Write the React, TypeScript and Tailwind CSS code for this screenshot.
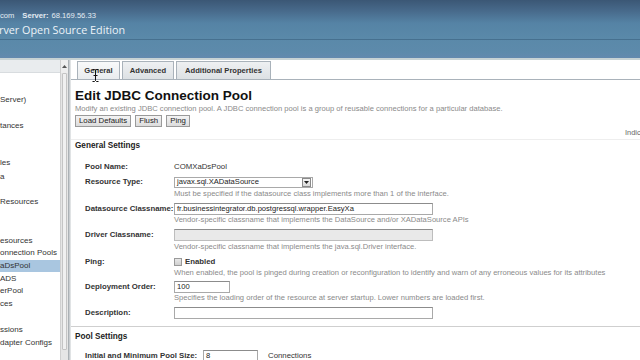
import React from "react";

const Label = ({ children }: { children: React.ReactNode }) => (
  <div className="w-[103px] shrink-0 pl-[14px] font-bold text-[7.8px] text-[#333] whitespace-nowrap">{children}</div>
);

const Help = ({ children, h = 12, mt = 0 }: { children: React.ReactNode; h?: number; mt?: number }) => (
  <div
    className="pl-[103px] text-[7.6px] text-[#8a8a8a] whitespace-nowrap flex items-center shrink-0"
    style={{ height: h, marginTop: mt }}
  >
    {children}
  </div>
);

const Input = ({ w, value, disabled }: { w: number; value?: string; disabled?: boolean }) => (
  <div
    className={
      "h-[12px] border border-[#a9a9a9] border-t-[#8c8c8c] flex items-center pl-[2px] text-[7.6px] text-[#222] whitespace-nowrap overflow-hidden " +
      (disabled ? "bg-[#e9e9e9] border-[#bdbdbd]" : "bg-white")
    }
    style={{ width: w }}
  >
    {value}
  </div>
);

const Row = ({ children, h = 12, mt = 0 }: { children: React.ReactNode; h?: number; mt?: number }) => (
  <div className="flex items-center shrink-0" style={{ height: h, marginTop: mt }}>
    {children}
  </div>
);

const sideItems: { t: string; y: number; sel?: boolean }[] = [
  { t: "Server)", y: 100 },
  { t: "tances", y: 126 },
  { t: "les", y: 163 },
  { t: "a", y: 177 },
  { t: "Resources", y: 202 },
  { t: "esources", y: 241 },
  { t: "onnection Pools", y: 253 },
  { t: "aDsPool", y: 266, sel: true },
  { t: "ADS", y: 279 },
  { t: "erPool", y: 291 },
  { t: "ces", y: 304 },
  { t: "ssions", y: 330 },
  { t: "dapter Configs", y: 343 },
];

export default function App() {
  return (
    <div className="w-[640px] h-[360px] overflow-hidden flex flex-col bg-white font-['Liberation_Sans',Arial,sans-serif]">
      {/* Header */}
      <div className="h-[58px] shrink-0 flex flex-col bg-[linear-gradient(to_bottom,#3b5775_0%,#47698a_18%,#5583a5_40%,#5a89a9_65%,#5d8aab_90%,#6389ae_100%)]">
        <div className="h-[10px]" />
        <div className="h-[12px] flex items-center text-[7.6px] text-[#e4ecf3] whitespace-nowrap">
          <span>com</span>
          <span className="ml-[8px] font-bold">Server:</span>
          <span className="ml-[3px]">68.169.56.33</span>
        </div>
        <div className="h-[16px] flex items-center text-[10.8px] text-[#edf3f8] font-['Open_Sans',sans-serif] whitespace-nowrap -ml-[1px]">
          rver Open Source Edition
        </div>
        <div className="h-[1px] mt-[1px] bg-[#46708f]" />
      </div>
      <div className="h-[2px] shrink-0 bg-[#c7d2d4]" />
      {/* Body */}
      <div className="flex-1 flex min-h-0">
        {/* Sidebar */}
        <div className="w-[60px] shrink-0 flex flex-col">
          <div className="h-[13px] bg-[#e9ecee] border-b border-[#d8dcdf]" />
          <div className="relative flex-1 bg-white">
            {sideItems.map((it) => (
              <div
                key={it.t}
                className={
                  "absolute left-0 w-[60px] h-[12px] flex items-center text-[8px] text-[#333] whitespace-nowrap overflow-hidden " +
                  (it.sel ? "bg-[#a9c6e0]" : "")
                }
                style={{ top: it.y - 79 }}
              >
                {it.t}
              </div>
            ))}
          </div>
        </div>
        {/* Scrollbar */}
        <div className="w-[8px] shrink-0 flex flex-col bg-[#e6e6e6] border-l border-[#d0d0d0]">
          <div className="h-[13px] bg-[#eeeeee] flex items-center justify-center">
            <svg width="5" height="3" viewBox="0 0 5 3">
              <path d="M0 3 L2.5 0 L5 3 Z" fill="#555" />
            </svg>
          </div>
          <div className="flex-1 mx-[1px] mb-[10px] bg-[#f0f0f0] border border-[#c4c4c4] rounded-[1px]" />
        </div>
        <div className="w-[3px] shrink-0 bg-[linear-gradient(to_right,#9da3a8,#c9cdd0,#eceeef)]" />
        {/* Content */}
        <div className="relative flex-1 flex flex-col min-w-0 bg-white">
          {/* Tabs */}
          <div className="h-[20px] shrink-0 flex items-end border-b border-[#a9b2ba] pl-[6px] gap-[2px]">
            <div className="w-[43px] h-[18px] flex items-center justify-center border border-b-0 border-[#a9b2ba] bg-[linear-gradient(to_bottom,#f8f9fa,#e9ecee)] text-[7.6px] font-bold text-[#333]">
              General
            </div>
            <div className="w-[52px] h-[18px] flex items-center justify-center border border-b-0 border-[#a9b2ba] bg-[linear-gradient(to_bottom,#eef0f2,#dde1e4)] text-[7.6px] font-bold text-[#333]">
              Advanced
            </div>
            <div className="w-[95px] h-[18px] flex items-center justify-center border border-b-0 border-[#a9b2ba] bg-[linear-gradient(to_bottom,#eef0f2,#dde1e4)] text-[7.6px] font-bold text-[#333]">
              Additional Properties
            </div>
          </div>
          {/* I-beam cursor */}
          <svg className="absolute left-[21px] top-[9px]" width="7" height="13" viewBox="0 0 7 13">
            <path d="M0.5 0.5 H2.5 L3.5 1.5 L4.5 0.5 H6.5 M3.5 1.5 V11.5 M0.5 12.5 H2.5 L3.5 11.5 L4.5 12.5 H6.5 M1.5 6.5 H5.5" stroke="#111" strokeWidth="1" fill="none" />
          </svg>

          <div className="pl-[4px] shrink-0">
            <div className="mt-[8px] h-[16px] leading-[16px] text-[13.5px] font-bold text-[#111] whitespace-nowrap">
              Edit JDBC Connection Pool
            </div>
            <div className="h-[10px] leading-[10px] text-[7.6px] text-[#8a8a8a] whitespace-nowrap">
              Modify an existing JDBC connection pool. A JDBC connection pool is a group of reusable connections for a particular database.
            </div>
            <div className="mt-[1px] h-[12px] flex gap-[4px]">
              {["Load Defaults", "Flush", "Ping"].map((b) => (
                <div
                  key={b}
                  className="h-[12px] px-[3px] flex items-center border border-[#9a9a9a] bg-[linear-gradient(to_bottom,#f4f4f4,#dcdcdc)] text-[7.8px] text-[#222] whitespace-nowrap"
                >
                  {b}
                </div>
              ))}
            </div>
          </div>
          <div className="h-[12px] shrink-0 flex items-center pl-[554px] text-[7.4px] text-[#666] whitespace-nowrap overflow-hidden">
            Indicates required field
          </div>
          <div className="h-[1px] shrink-0 bg-[#eeeeee]" />
          <div className="h-[12px] shrink-0 flex items-center pl-[4px] text-[8.2px] font-bold text-[#222]">
            General Settings
          </div>

          <Row mt={9}>
            <Label>Pool Name:</Label>
            <div className="text-[7.8px] text-[#333]">COMXaDsPool</div>
          </Row>
          <Row mt={3}>
            <Label>Resource Type:</Label>
            <div className="w-[139px] h-[11px] border border-[#a9a9a9] bg-white flex items-center">
              <div className="flex-1 pl-[2px] text-[7.6px] text-[#222] whitespace-nowrap">javax.sql.XADataSource</div>
              <div className="w-[9px] h-[9px] mr-[1px] border border-[#8a8a8a] bg-[linear-gradient(to_bottom,#f6f6f6,#dadada)] flex items-center justify-center">
                <svg width="5" height="3" viewBox="0 0 5 3">
                  <path d="M0 0 L5 0 L2.5 3 Z" fill="#222" />
                </svg>
              </div>
            </div>
          </Row>
          <Help h={9} mt={1}>Must be specified if the datasource class implements more than 1 of the interface.</Help>
          <Row mt={5}>
            <Label>Datasource Classname:</Label>
            <Input w={259} value="fr.businessintegrator.db.postgressql.wrapper.EasyXa" />
          </Row>
          <Help h={10}>Vendor-specific classname that implements the DataSource and/or XADataSource APIs</Help>
          <Row mt={4}>
            <Label>Driver Classname:</Label>
            <Input w={259} disabled />
          </Row>
          <Help h={11}>Vendor-specific classname that implements the java.sql.Driver interface.</Help>
          <Row mt={4}>
            <Label>Ping:</Label>
            <div className="flex items-center gap-[3px]">
              <div className="w-[8px] h-[8px] border border-[#9a9a9a] bg-[linear-gradient(to_bottom,#e8e8e8,#d0d0d0)]" />
              <span className="text-[7.8px] font-bold text-[#333]">Enabled</span>
            </div>
          </Row>
          <Help h={9}>When enabled, the pool is pinged during creation or reconfiguration to identify and warn of any erroneous values for its attributes</Help>
          <Row mt={4}>
            <Label>Deployment Order:</Label>
            <Input w={56} value="100" />
          </Row>
          <Help h={10}>Specifies the loading order of the resource at server startup. Lower numbers are loaded first.</Help>
          <Row mt={4}>
            <Label>Description:</Label>
            <Input w={259} />
          </Row>
          <div className="mt-[7px] h-[1px] shrink-0 bg-[#cfcfcf]" />
          <div className="mt-[4px] h-[12px] shrink-0 flex items-center pl-[4px] text-[8.2px] font-bold text-[#222]">
            Pool Settings
          </div>
          <Row mt={7}>
            <div className="w-[132px] shrink-0 pl-[14px] font-bold text-[7.8px] text-[#333] whitespace-nowrap">
              Initial and Minimum Pool Size:
            </div>
            <Input w={55} value="8" />
            <span className="ml-[10px] text-[7.8px] text-[#333]">Connections</span>
          </Row>
        </div>
      </div>
    </div>
  );
}
